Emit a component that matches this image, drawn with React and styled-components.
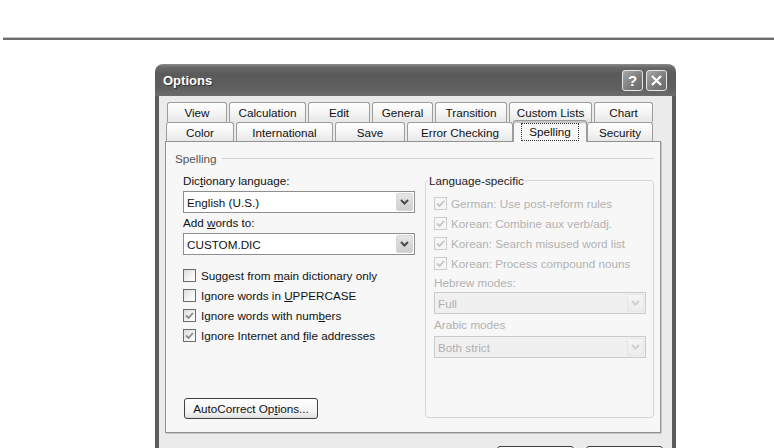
import React from "react";
import styled, { createGlobalStyle, css } from "styled-components";

const GlobalStyle = createGlobalStyle`
  html, body { margin: 0; padding: 0; background: #fff; overflow: hidden; }
  body { width: 774px; height: 448px; font-family: "Liberation Sans", Arial, sans-serif; font-size: 11.7px; color: #111; }
  u { text-decoration: underline; text-underline-offset: 1px; }
`;

const Page = styled.div`
  width: 774px;
  height: 448px;
  overflow: hidden;
  display: flex;
  flex-direction: column;
`;

const TopRule = styled.div`
  margin: 37px 0 0 3px;
  height: 0;
  border-top: 1px solid #c2c2c2;
  border-bottom: 2px solid #6e6e6e;
  flex-shrink: 0;
`;

const Dialog = styled.div`
  margin: 24px 0 0 155px;
  width: 521px;
  flex-shrink: 0;
  display: flex;
  flex-direction: column;
  border-radius: 8px 8px 0 0;
  overflow: hidden;
`;

const TitleBar = styled.div`
  height: 32px;
  display: flex;
  align-items: center;
  padding: 0 9px 0 8px;
  background: linear-gradient(#8c8c8c 0px, #6a6a6a 3px, #5a5a5a 10px, #5f5f5f 24px, #6c6c6c 32px);
`;

const Title = styled.div`
  font-family: "Liberation Sans", Arial, sans-serif;
  font-weight: bold;
  font-size: 13px;
  color: #fff;
  text-shadow: 1px 1px 0 #333;
  margin-top: 1px;
`;

const CaptionButtons = styled.div`
  margin-left: auto;
  display: flex;
  gap: 3px;
`;

const CaptionButton = styled.div`
  width: 21px;
  height: 21px;
  box-sizing: border-box;
  border: 1px solid #e6e6e6;
  border-radius: 3px;
  background: linear-gradient(135deg, #a8a8a8, #7a7a7a 60%, #6a6a6a);
  display: flex;
  align-items: center;
  justify-content: center;
  color: #fff;
  font-weight: bold;
  font-size: 15px;
`;

const Body = styled.div`
  background: #ebebeb;
  border-left: 4px solid #5c5c5c;
  border-right: 4px solid #5c5c5c;
  padding: 6px 11px 0 6px;
  display: flex;
  flex-direction: column;
  height: 420px;
`;

const TabRow = styled.div`
  display: flex;
  gap: 2px;
  margin-left: ${(p) => p.$indent}px;
  height: ${(p) => p.$h}px;
  align-items: flex-end;
`;

const Tab = styled.div`
  width: ${(p) => p.$w}px;
  height: 100%;
  box-sizing: border-box;
  border: 1px solid #9c9c9c;
  border-bottom: none;
  border-radius: 3px 3px 0 0;
  background: linear-gradient(#ffffff, #f3f3f3 60%, #e6e6e6);
  display: flex;
  align-items: center;
  justify-content: center;
  white-space: nowrap;
  ${(p) =>
    p.$active &&
    css`
      position: relative;
      z-index: 2;
      width: ${p.$w + 4}px;
      margin: 0 -2px -1px;
      height: calc(100% + 3px);
      background: #f7f7f7;
      box-shadow: inset 0 2px 0 #c6c6c6;
    `}
`;

const Focus = styled.span`
  outline: 1px dotted #333;
  outline-offset: 1px;
  padding: 0 6px;
  line-height: 14px;
  margin-top: 1px;
`;

const Panel = styled.div`
  height: 292px;
  box-sizing: border-box;
  border: 1px solid #919191;
  box-shadow: 1px 1px 0 #c9c9c9;
  background: #f7f7f7;
  padding: 10px 6px 0 9px;
  display: flex;
  flex-direction: column;
`;

const SectionHeader = styled.div`
  display: flex;
  align-items: center;
  gap: 5px;
  height: 13px;
  color: #555;
  &::after {
    content: "";
    flex: 1;
    height: 1px;
    background: #d2d2d2;
  }
`;

const Columns = styled.div`
  display: flex;
  gap: 10px;
  margin-top: 9px;
  padding-left: 8px;
  height: 245px;
`;

const LeftColumn = styled.div`
  width: 232px;
  display: flex;
  flex-direction: column;
`;

const Label = styled.div`
  line-height: 14px;
  margin-top: ${(p) => p.$mt || 0}px;
  color: ${(p) => (p.$disabled ? "#b2b2b2" : "#111")};
`;

const Combo = styled.div`
  width: ${(p) => p.$w}px;
  height: 22px;
  box-sizing: border-box;
  margin-top: ${(p) => p.$mt || 0}px;
  border: 1px solid ${(p) => (p.$disabled ? "#cbcbcb" : "#8e8e8e")};
  background: ${(p) => (p.$disabled ? "#f0f0f0" : "#fff")};
  color: ${(p) => (p.$disabled ? "#b0b0b0" : "#111")};
  display: flex;
  align-items: center;
  padding: 1px 1px 1px 3px;
`;

const ComboText = styled.span`
  flex: 1;
`;

const DropButton = styled.div`
  width: 17px;
  height: 18px;
  border-radius: 2px;
  background: ${(p) =>
    p.$disabled ? "linear-gradient(#f4f4f4, #ececec)" : "linear-gradient(#e6e6e6, #cdcdcd)"};
  border: 1px solid ${(p) => (p.$disabled ? "#e6e6e6" : "#d8d8d8")};
  box-sizing: border-box;
  display: flex;
  align-items: center;
  justify-content: center;
`;

const CheckList = styled.div`
  display: flex;
  flex-direction: column;
  margin-top: ${(p) => p.$mt || 0}px;
`;

const CheckRow = styled.div`
  height: 20px;
  display: flex;
  align-items: center;
  gap: ${(p) => (p.$disabled ? 4 : 5)}px;
  color: ${(p) => (p.$disabled ? "#b2b2b2" : "#111")};
  white-space: nowrap;
`;

const Box = styled.div`
  width: 13px;
  height: 13px;
  box-sizing: border-box;
  border: 1px solid ${(p) => (p.$disabled ? "#cdcdcd" : "#6a6a6a")};
  background: ${(p) =>
    p.$disabled ? "#f6f6f6" : "linear-gradient(135deg, #dcdcdc, #f4f4f4 60%, #ffffff)"};
  display: flex;
  align-items: center;
  justify-content: center;
  flex-shrink: 0;
`;

const PushButton = styled.div`
  width: ${(p) => p.$w}px;
  height: 22px;
  box-sizing: border-box;
  border: 1px solid #404040;
  border-radius: 3px;
  background: linear-gradient(#ffffff, #f2f2f2 70%, #e0e0e0);
  display: flex;
  align-items: center;
  justify-content: center;
  margin-top: ${(p) => p.$mt || 0}px;
  margin-left: ${(p) => p.$ml || 0}px;
  white-space: nowrap;
`;

const GroupBox = styled.fieldset`
  margin: 0;
  width: 229px;
  box-sizing: border-box;
  padding: 0 6px 0 8px;
  border: 1px solid #d6d6d6;
  border-radius: 4px;
  height: 244px;
  min-width: 0;
`;

const Legend = styled.legend`
  padding: 0 1px;
  margin-left: -6px;
  line-height: 13px;
  color: #222;
`;

const ButtonRow = styled.div`
  display: flex;
  justify-content: flex-end;
  gap: 12px;
  margin: 13px -2px 0 0;
`;

const DialogButton = styled(PushButton)`
  height: 23px;
`;

const Chevron = ({ disabled }) => (
  <svg width="9" height="6" viewBox="0 0 9 6">
    <polyline
      points="1,1 4.5,4.5 8,1"
      fill="none"
      stroke={disabled ? "#cfcfcf" : "#4a4a4a"}
      strokeWidth="2"
    />
  </svg>
);

const Check = ({ disabled }) => (
  <svg width="9" height="9" viewBox="0 0 9 9">
    <polyline
      points="1,4.5 3.5,7 8,2"
      fill="none"
      stroke={disabled ? "#c4c4c4" : "#8a8a8a"}
      strokeWidth="1.8"
    />
  </svg>
);

const CheckItem = ({ checked, disabled, children }) => (
  <CheckRow $disabled={disabled}>
    <Box $disabled={disabled}>{checked && <Check disabled={disabled} />}</Box>
    <span>{children}</span>
  </CheckRow>
);

const ComboBox = ({ w, mt, disabled, children }) => (
  <Combo $w={w} $mt={mt} $disabled={disabled}>
    <ComboText>{children}</ComboText>
    <DropButton $disabled={disabled}>
      <Chevron disabled={disabled} />
    </DropButton>
  </Combo>
);

const backTabs = [
  ["View", 60],
  ["Calculation", 77],
  ["Edit", 62],
  ["General", 61],
  ["Transition", 72],
  ["Custom Lists", 83],
  ["Chart", 59],
];

const frontTabs = [
  ["Color", 68],
  ["International", 97],
  ["Save", 70],
  ["Error Checking", 106],
  ["Spelling", 70, true],
  ["Security", 66],
];

export default function App() {
  return (
    <>
      <GlobalStyle />
      <Page>
        <TopRule />
        <Dialog>
          <TitleBar>
            <Title>Options</Title>
            <CaptionButtons>
              <CaptionButton>?</CaptionButton>
              <CaptionButton>
                <svg width="13" height="13" viewBox="0 0 13 13">
                  <path d="M2 2 L11 11 M11 2 L2 11" stroke="#fff" strokeWidth="2.2" />
                </svg>
              </CaptionButton>
            </CaptionButtons>
          </TitleBar>
          <Body>
            <TabRow $indent={2} $h={20}>
              {backTabs.map(([t, w]) => (
                <Tab key={t} $w={w}>
                  {t}
                </Tab>
              ))}
            </TabRow>
            <TabRow $indent={1} $h={19}>
              {frontTabs.map(([t, w, a]) => (
                <Tab key={t} $w={w} $active={a}>
                  {a ? <Focus>{t}</Focus> : t}
                </Tab>
              ))}
            </TabRow>
            <Panel>
              <SectionHeader>Spelling</SectionHeader>
              <Columns>
                <LeftColumn>
                  <Label $mt={0}>
                    Dic<u>t</u>ionary language:
                  </Label>
                  <ComboBox w={232} mt={3}>
                    English (U.S.)
                  </ComboBox>
                  <Label $mt={3}>
                    Add <u>w</u>ords to:
                  </Label>
                  <ComboBox w={232} mt={3}>
                    CUSTOM.DIC
                  </ComboBox>
                  <CheckList $mt={10}>
                    <CheckItem>
                      Suggest from <u>m</u>ain dictionary only
                    </CheckItem>
                    <CheckItem>
                      Ignore words in <u>U</u>PPERCASE
                    </CheckItem>
                    <CheckItem checked>
                      Ignore words with num<u>b</u>ers
                    </CheckItem>
                    <CheckItem checked>
                      Ignore Internet and <u>f</u>ile addresses
                    </CheckItem>
                  </CheckList>
                  <PushButton $w={134} $mt={53} $ml={1}>
                    AutoCorrect Op<u>t</u>ions...
                  </PushButton>
                </LeftColumn>
                <GroupBox>
                  <Legend>Language-specific</Legend>
                  <CheckList $mt={6}>
                    <CheckItem checked disabled>
                      German: Use post-reform rules
                    </CheckItem>
                    <CheckItem checked disabled>
                      Korean: Combine aux verb/adj.
                    </CheckItem>
                    <CheckItem checked disabled>
                      Korean: Search misused word list
                    </CheckItem>
                    <CheckItem checked disabled>
                      Korean: Process compound nouns
                    </CheckItem>
                  </CheckList>
                  <Label $mt={3} $disabled>
                    Hebrew modes:
                  </Label>
                  <ComboBox w={212} mt={2} disabled>
                    Full
                  </ComboBox>
                  <Label $mt={4} $disabled>
                    Arabic modes
                  </Label>
                  <ComboBox w={212} mt={4} disabled>
                    Both strict
                  </ComboBox>
                </GroupBox>
              </Columns>
            </Panel>
            <ButtonRow>
              <DialogButton $w={77} aria-label="OK" />
              <DialogButton $w={77} aria-label="Cancel" />
            </ButtonRow>
          </Body>
        </Dialog>
      </Page>
    </>
  );
}
